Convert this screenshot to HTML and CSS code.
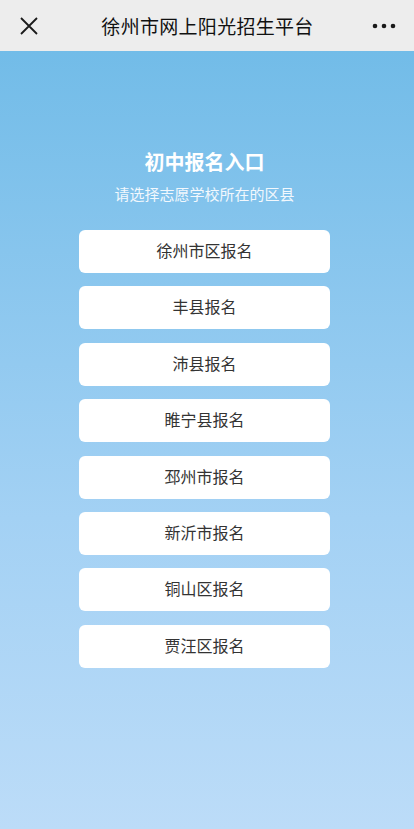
FILE: index.html
```html
<!DOCTYPE html>
<html lang="zh-CN">
<head>
    <meta charset="UTF-8">
    <meta name="viewport" content="width=device-width, initial-scale=1.0">
    <title>徐州市网上阳光招生平台</title>
    <link rel="stylesheet" href="styles.css">
</head>
<body>
    <div class="nav-bar">
        <span class="nav-icon close">
            <svg width="20" height="20" viewBox="0 0 20 20"><path d="M2 2L18 18M18 2L2 18" stroke="#1a1a1a" stroke-width="1.8" fill="none"/></svg>
        </span>
        <h1 class="nav-title">徐州市网上阳光招生平台</h1>
        <span class="nav-icon more">
            <svg width="24" height="6" viewBox="0 0 24 6"><circle cx="3" cy="3" r="2.3" fill="#1a1a1a"/><circle cx="12" cy="3" r="2.3" fill="#1a1a1a"/><circle cx="21" cy="3" r="2.3" fill="#1a1a1a"/></svg>
        </span>
    </div>
    <div class="page">
        <h2 class="title">初中报名入口</h2>
        <p class="subtitle">请选择志愿学校所在的区县</p>
        <div class="district-list">
            <a class="district-btn">徐州市区报名</a>
            <a class="district-btn">丰县报名</a>
            <a class="district-btn">沛县报名</a>
            <a class="district-btn">睢宁县报名</a>
            <a class="district-btn">邳州市报名</a>
            <a class="district-btn">新沂市报名</a>
            <a class="district-btn">铜山区报名</a>
            <a class="district-btn">贾汪区报名</a>
        </div>
    </div>
</body>
</html>
```
FILE: styles.css
```css
html, body {
    margin: 0;
    padding: 0;
    height: 100%;
}

body {
    font-family: "Noto Sans CJK SC", "Noto Sans", sans-serif;
    display: flex;
    flex-direction: column;
    background: #bcdcf8;
}

.nav-bar {
    height: 51px;
    flex-shrink: 0;
    display: flex;
    align-items: center;
    justify-content: space-between;
    padding: 0 18px 0 19px;
    background: #ededed;
    box-sizing: border-box;
}

.nav-icon {
    display: flex;
    align-items: center;
    width: 24px;
}

.nav-title {
    margin: 0;
    font-size: 19px;
    font-weight: 400;
    color: #111;
    letter-spacing: 0.3px;
}

.page {
    flex: 1;
    display: flex;
    flex-direction: column;
    align-items: center;
    padding: 96px 5px 0 0;
    background: linear-gradient(to bottom, #72bce8 0%, #a3d1f4 60%, #bcdcf8 100%);
}

.title {
    margin: 0;
    font-size: 20px;
    font-weight: 700;
    color: #fff;
    line-height: 30px;
}

.subtitle {
    margin: 5px 0 0;
    font-size: 15px;
    color: #f2f8fd;
    line-height: 24px;
}

.district-list {
    margin-top: 24px;
    display: flex;
    flex-direction: column;
    gap: 13.4px;
}

.district-btn {
    width: 251px;
    height: 43px;
    padding-bottom: 3px;
    box-sizing: border-box;
    display: flex;
    align-items: center;
    justify-content: center;
    background: #fff;
    border-radius: 6px;
    font-size: 16px;
    color: #333;
    cursor: pointer;
}
```
